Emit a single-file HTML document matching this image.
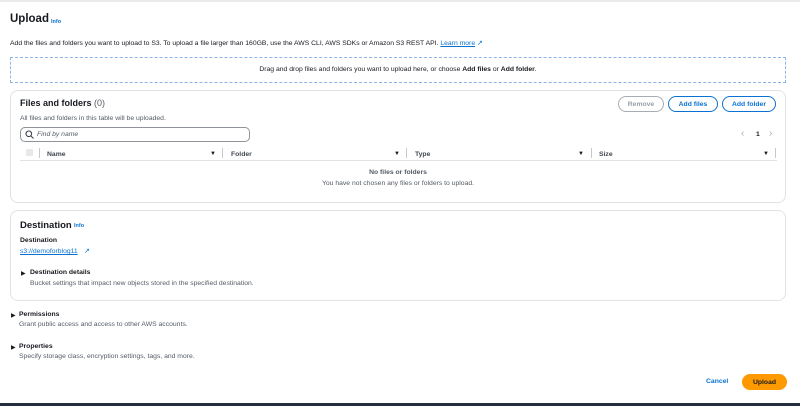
<!DOCTYPE html>
<html><head><style>
*{box-sizing:border-box;margin:0;padding:0}
body{width:800px;height:406px;background:#fff;font-family:"Liberation Sans",sans-serif;color:#16191f;position:relative;overflow:hidden;font-size:6.8px}
.a{position:absolute;white-space:nowrap}
.b{font-weight:bold}
.g{color:#545b64}
.l{color:#0972d3}
.panel{position:absolute;border:1px solid #e0e3e6;border-radius:8px;background:#fff}
.btn{position:absolute;height:16px;border-radius:8px;border:1.5px solid #0972d3;color:#0972d3;font-weight:bold;font-size:6.8px;display:flex;align-items:center;justify-content:center;background:#fff}
</style></head><body>
<div class="a" style="left:0;top:0;width:800px;height:2px;background:#eaeaea"></div>
<div class="a b" style="left:10px;top:13px;font-size:11.5px">Upload</div>
<div class="a b l" style="left:51px;top:19px;font-size:5.5px">Info</div>
<div class="a" style="left:10px;top:39px">Add the files and folders you want to upload to S3. To upload a file larger than 160GB, use the AWS CLI, AWS SDKs or Amazon S3 REST API. <span class="l" style="text-decoration:underline">Learn more</span> <span class="l">↗</span></div>
<div class="a" style="left:10px;top:57px;width:776px;height:26px;border:1px dashed #8cb6e3;text-align:center;line-height:24px">Drag and drop files and folders you want to upload here, or choose <b>Add files</b> or <b>Add folder</b>.</div>
<div class="panel" style="left:10px;top:90px;width:776px;height:113px"></div>
<div class="a b" style="left:20px;top:98px;font-size:9px">Files and folders <span style="font-weight:normal" class="g">(0)</span></div>
<div class="a g" style="left:20px;top:115px">All files and folders in this table will be uploaded.</div>
<div class="a" style="left:20px;top:127px;width:230px;height:15px;border:1px solid #8d9399;border-radius:5px"></div>
<svg class="a" style="left:25px;top:130px" width="9" height="9" viewBox="0 0 9 9"><circle cx="3.8" cy="3.8" r="2.8" fill="none" stroke="#414750" stroke-width="1.1"/><path d="M6 6L8.5 8.5" stroke="#414750" stroke-width="1.1"/></svg>
<div class="a g" style="left:37px;top:131px;font-style:italic">Find by name</div>
<div class="btn" style="left:618px;top:96px;width:46px;border-color:#a8adb3;color:#9ba0a6">Remove</div>
<div class="btn" style="left:668px;top:96px;width:50px">Add files</div>
<div class="btn" style="left:722px;top:96px;width:54px">Add folder</div>
<div class="a g" style="left:741px;top:128px;font-size:10px;color:#aab">‹</div>
<div class="a b" style="left:756px;top:131px">1</div>
<div class="a" style="left:769px;top:128px;font-size:10px;color:#aab">›</div>
<div class="a" style="left:26px;top:149px;width:7px;height:7px;background:#e6e8ea;border-radius:1px"></div>
<div class="a" style="left:20px;top:160px;width:757px;height:1px;background:#e0e3e6"></div>
<div class="a b" style="left:47px;top:151px;color:#414750">Name</div>
<div class="a b" style="left:231px;top:151px;color:#414750">Folder</div>
<div class="a b" style="left:415px;top:151px;color:#414750">Type</div>
<div class="a b" style="left:599px;top:151px;color:#414750">Size</div>
<div class="a" style="left:210px;top:151px;font-size:6px">▼</div><div class="a" style="left:394px;top:151px;font-size:6px">▼</div><div class="a" style="left:578px;top:151px;font-size:6px">▼</div><div class="a" style="left:763px;top:151px;font-size:6px">▼</div>
<div class="a" style="left:39px;top:148px;width:1px;height:10px;background:#c5c9cd"></div>
<div class="a" style="left:222px;top:148px;width:1px;height:10px;background:#c5c9cd"></div>
<div class="a" style="left:406px;top:148px;width:1px;height:10px;background:#c5c9cd"></div>
<div class="a" style="left:591px;top:148px;width:1px;height:10px;background:#c5c9cd"></div>
<div class="a" style="left:775px;top:148px;width:1px;height:10px;background:#c5c9cd"></div>
<div class="a b g" style="left:0;width:796px;text-align:center;top:169px">No files or folders</div>
<div class="a g" style="left:0;width:796px;text-align:center;top:180px">You have not chosen any files or folders to upload.</div>
<div class="panel" style="left:10px;top:210px;width:776px;height:91px"></div>
<div class="a b" style="left:20px;top:220px;font-size:9.5px">Destination</div>
<div class="a b l" style="left:74px;top:223px;font-size:5.5px">Info</div>
<div class="a b" style="left:20px;top:237px">Destination</div>
<div class="a l" style="left:20px;top:248px;text-decoration:underline">s3://demoforblog11</div><div class="a l" style="left:84px;top:247px">↗</div>
<div class="a" style="left:21px;top:270px;font-size:6px">▶</div>
<div class="a b" style="left:30px;top:269px">Destination details</div>
<div class="a g" style="left:30px;top:280px">Bucket settings that impact new objects stored in the specified destination.</div>
<div class="a" style="left:11px;top:312px;font-size:6px">▶</div>
<div class="a b" style="left:19px;top:311px">Permissions</div>
<div class="a g" style="left:19px;top:321px">Grant public access and access to other AWS accounts.</div>
<div class="a" style="left:11px;top:344px;font-size:6px">▶</div>
<div class="a b" style="left:19px;top:343px">Properties</div>
<div class="a g" style="left:19px;top:353px">Specify storage class, encryption settings, tags, and more.</div>
<div class="a b l" style="left:706px;top:378px">Cancel</div>
<div class="a b" style="left:742px;top:374px;width:45px;height:16px;border-radius:8px;background:#ff9900;display:flex;align-items:center;justify-content:center">Upload</div>
<div class="a" style="left:0;top:403px;width:800px;height:3px;background:#232f3e"></div>
</body></html>
